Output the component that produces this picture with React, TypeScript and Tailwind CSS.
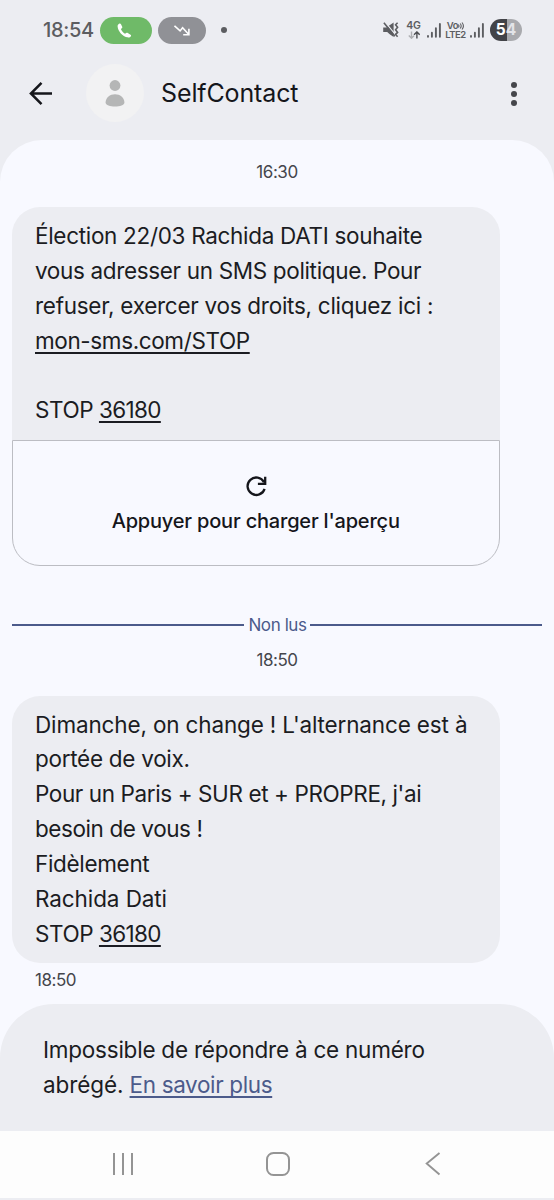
import React from 'react';
import clsx from 'clsx';

interface TextPart {
  text: string;
  tracking: string;
  link?: boolean;
}

const firstMessage: TextPart[][] = [
  [{ text: 'Élection 22/03 Rachida DATI souhaite', tracking: 'tracking-[-0.31px]' }],
  [{ text: 'vous adresser un SMS politique. Pour', tracking: 'tracking-[-0.34px]' }],
  [{ text: 'refuser, exercer vos droits, cliquez ici :', tracking: 'tracking-[-0.27px]' }],
  [{ text: 'mon-sms.com/STOP', tracking: 'tracking-[-0.38px]', link: true }],
  [],
  [
    { text: 'STOP ', tracking: 'tracking-[-0.45px]' },
    { text: '36180', tracking: 'tracking-[-0.65px]', link: true },
  ],
];

const secondMessage: TextPart[][] = [
  [{ text: "Dimanche, on change ! L'alternance est à", tracking: 'tracking-[-0.15px]' }],
  [{ text: 'portée de voix.', tracking: 'tracking-[-0.28px]' }],
  [{ text: "Pour un Paris + SUR et + PROPRE, j'ai", tracking: 'tracking-[-0.4px]' }],
  [{ text: 'besoin de vous !', tracking: 'tracking-[-0.42px]' }],
  [{ text: 'Fidèlement', tracking: 'tracking-[-0.33px]' }],
  [{ text: 'Rachida Dati', tracking: 'tracking-[-0.09px]' }],
  [
    { text: 'STOP ', tracking: 'tracking-[-0.45px]' },
    { text: '36180', tracking: 'tracking-[-0.65px]', link: true },
  ],
];

const MessageText: React.FC<{ lines: TextPart[][] }> = ({ lines }) => (
  <div className="text-[22.5px] leading-[34.85px] text-[#1b1c22] whitespace-pre">
    {lines.map((parts, i) => (
      <div key={i} className="h-[34.85px]">
        {parts.map((part) => (
          <span
            key={part.text}
            className={clsx(
              part.tracking,
              part.link &&
                'underline decoration-[1.7px] underline-offset-[3px] [text-decoration-skip-ink:none]'
            )}
          >
            {part.text}
          </span>
        ))}
      </div>
    ))}
  </div>
);

const Signal: React.FC = () => (
  <svg className="w-[14px] h-[15px] shrink-0" viewBox="0 0 14 15" stroke="#5c5d61" strokeWidth="1.9" strokeLinecap="round">
    <path d="M1 13v.8M4.9 9.8v4M8.9 5.2v8.6M12.9 1v12.8" />
  </svg>
);

const StatusBar: React.FC = () => (
  <div className="h-[60px] pl-[43px] pr-8 flex items-center text-[#5c5d61]">
    <span className="w-[57px] text-[20px] font-medium tracking-[-0.3px]">18:54</span>
    <div className="w-[52px] h-[27px] rounded-full bg-[#6fba68] flex items-center justify-center">
      <svg className="w-[15px] h-[15px] mr-[3px]" viewBox="0 0 15 15" fill="white">
        <path d="M2.1.8C2.8.3 3.7.5 4 1.2l1.2 2.5c.3.6.1 1.2-.4 1.6l-.9.7c.6 1.8 2 3.6 4.1 4.7l1.2-.7c.5-.4 1.1-.4 1.6 0l2.7 1.7c.7.4.8 1.2.2 1.8l-.5.4c-.8.6-2 .7-3.2.4C5.1 13 1 7.9.6 3.4.5 2.4 1.1 1.5 2.1.8z" />
      </svg>
    </div>
    <div className="ml-[6px] w-[48px] h-[27px] rounded-full bg-[#909196] flex items-center justify-center">
      <svg className="w-4 h-[11px]" viewBox="0 0 16 11" fill="none" stroke="white" strokeWidth="1.6">
        <path d="M.5.8l5.6 5.1 2.5-3.1 6 6.4M9.2 9.7h5.7V3.7" />
      </svg>
    </div>
    <span className="ml-[15px] size-[6px] rounded-full bg-[#5c5d61]" />

    <div className="ml-auto flex items-center">
      {/* Muted speaker with vibration */}
      <svg className="w-4 h-4 shrink-0" viewBox="0 0 16 16">
        <path d="M.2 5.4h3.2l7.2-4.8v14.5l-4.2-3.2-2.2-2H.2z" fill="#5c5d61" />
        <path d="M2 0l11.6 14.2" stroke="#ecedf2" strokeWidth="1.3" />
        <path d="M.9.8l11 13.4" stroke="#5c5d61" strokeWidth="1.6" />
        <path d="M14.6.8l-2 2 2 2.4-2 2.6 2 2.6-2 2 2 2.4" stroke="#5c5d61" strokeWidth="1.6" fill="none" />
      </svg>
      <div className="ml-[7px] w-[15px] flex flex-col items-center">
        <span className="text-[10.5px] leading-[9px] font-semibold tracking-[-0.2px]">4G</span>
        <svg className="mt-[1px] w-3 h-2" viewBox="0 0 12 8" fill="none" strokeWidth="1.4">
          <path d="M3.5.5v6.5M.8 4.5l2.7 2.7L6 4.7" stroke="#aeafb3" />
          <path d="M8.9 7.6V1M6 3.7L8.9.9l2.8 2.8" stroke="#4b4c50" />
        </svg>
      </div>
      <div className="ml-[6px]">
        <Signal />
      </div>
      <div className="ml-[4px] w-[21px] flex flex-col items-center text-[9.5px] leading-[9px] font-semibold">
        <span className="flex items-center tracking-[-0.3px]">
          Vo
          <svg className="w-[6px] h-[8px]" viewBox="0 0 6 8" fill="none" stroke="#5c5d61" strokeWidth="1.1">
            <path d="M.4 2.5c.7.9.7 2.1 0 3M2.2 1.5c1.2 1.5 1.2 3.5 0 5M4 .5c1.8 2.2 1.8 4.8 0 7" />
          </svg>
        </span>
        <span className="tracking-[-0.5px]">LTE2</span>
      </div>
      <div className="ml-[4px]">
        <Signal />
      </div>
      <div className="ml-[6px] w-8 h-[22px] rounded-full bg-[linear-gradient(90deg,#424348_52%,#a9aaae_52%)] flex items-center justify-center text-[15.5px] font-bold text-white">
        <span>5</span>
        <span className="text-[#e3e4e8]">4</span>
      </div>
    </div>
  </div>
);

const ChatHeader: React.FC = () => (
  <div className="h-20 flex items-start">
    <svg className="ml-[29px] mt-[22px] w-6 h-[23px]" viewBox="0 0 24 23" fill="none" stroke="#15161b" strokeWidth="2.5">
      <path d="M23 11.5H2M12.5.9L1.9 11.5l10.6 10.6" />
    </svg>
    <div className="ml-[33px] mt-[4px] size-[58px] rounded-full bg-[#f2f2f3] flex items-center justify-center">
      <svg className="w-5 h-[27px]" viewBox="0 0 20 27" fill="#b5b6b6">
        <circle cx="10" cy="5.5" r="5.4" />
        <path d="M.6 22.5C.6 17.5 5 14.2 10 14.2s9.4 3.3 9.4 8.3c0 2.7-4.6 4.1-9.4 4.1S.6 25.2.6 22.5z" />
      </svg>
    </div>
    <h1 className="ml-[17px] mt-[15px] text-[25px] leading-9 tracking-[-0.12px] text-[#15161b]">
      SelfContact
    </h1>
    <div className="ml-auto mr-[37px] mt-[22px] flex flex-col gap-[3px]">
      <span className="size-[6px] rounded-full bg-[#45464b]" />
      <span className="size-[6px] rounded-full bg-[#45464b]" />
      <span className="size-[6px] rounded-full bg-[#45464b]" />
    </div>
  </div>
);

const LinkPreview: React.FC = () => (
  <div className="h-[126.5px] rounded-b-[28px] border-[1.5px] border-[#bcbdc3] bg-[#f8f9ff] flex flex-col items-center">
    <svg className="mt-[35px] ml-[1.5px] w-[21px] h-[21px]" viewBox="0 0 21 21" fill="none" stroke="#15161b" strokeWidth="2.3">
      <path d="M18.6 12.8A8.7 8.7 0 1 1 18 6.2M19.2.7v7.2h-7.3" />
    </svg>
    <span className="mt-[10px] text-[20px] leading-7 font-medium tracking-[-0.19px] text-[#15161b]">
      Appuyer pour charger l'aperçu
    </span>
  </div>
);

const NavigationBar: React.FC = () => (
  <div className="h-[69px] bg-[#fdfdfd] border-b-2 border-[#ecedf2] flex">
    <svg className="ml-[112px] mt-[22px] w-[22px] h-[22px]" viewBox="0 0 22 22" stroke="#949494" strokeWidth="2">
      <path d="M2 0v22M11 0v22M20 0v22" />
    </svg>
    <div className="ml-[132px] mt-[21px] w-6 h-[24px] rounded-[7.5px] border-2 border-[#949494]" />
    <svg className="ml-[135px] mt-[21px] w-4 h-6" viewBox="0 0 16 24" fill="none" stroke="#949494" strokeWidth="1.9">
      <path d="M14.5 1L1.7 11.5l12.8 11" />
    </svg>
  </div>
);

export const App: React.FC = () => {
  return (
    <div className="w-[554px] h-[1200px] overflow-hidden bg-[#ecedf2] font-['Inter','Roboto',sans-serif] flex flex-col">
      <StatusBar />
      <ChatHeader />

      {/* Conversation */}
      <main className="flex-1 bg-[#f8f9ff] rounded-t-[42px] text-[17px] text-[#45464c]">
        <div className="pt-[20px] text-center leading-6 tracking-[-0.45px]">16:30</div>

        <div className="ml-3 mt-[23px] w-[487.5px]">
          <div className="h-[232.5px] rounded-t-[28px] bg-[#ecedf2] pl-[23px] pt-[12px]">
            <MessageText lines={firstMessage} />
          </div>
          <LinkPreview />
        </div>

        <div className="mx-3 mt-[47px] h-6 flex items-center gap-[3px] text-[#4c5b8b]">
          <div className="flex-1 h-[2px] bg-[#4c5b8b]" />
          <span className="leading-6 tracking-[-0.42px] pl-[1px]">Non lus</span>
          <div className="flex-1 h-[2px] bg-[#4c5b8b]" />
        </div>
        <div className="mt-[11px] text-center leading-6 tracking-[-0.45px]">18:50</div>

        <div className="ml-3 mt-[23.5px] w-[487.5px] h-[267px] rounded-[28px] bg-[#ecedf2] pl-[23px] pt-[12px]">
          <MessageText lines={secondMessage} />
        </div>
        <div className="ml-[35px] mt-[5.5px] leading-6 tracking-[-0.45px]">18:50</div>
      </main>

      {/* Reply notice */}
      <div className="bg-[#f8f9ff]">
        <div className="h-[127px] rounded-t-[54px] bg-[#ecedf2] pl-[43px] pt-[29px] text-[22.5px] leading-[34.85px] text-[#1b1c22] whitespace-pre">
          <div className="tracking-[-0.23px]">Impossible de répondre à ce numéro</div>
          <div>
            <span className="tracking-[-0.1px]">abrégé. </span>
            <span className="tracking-[-0.36px] text-[#4c5b8b] underline decoration-[1.7px] underline-offset-[3px] [text-decoration-skip-ink:none]">
              En savoir plus
            </span>
          </div>
        </div>
      </div>

      <NavigationBar />
    </div>
  );
};

export default App;
